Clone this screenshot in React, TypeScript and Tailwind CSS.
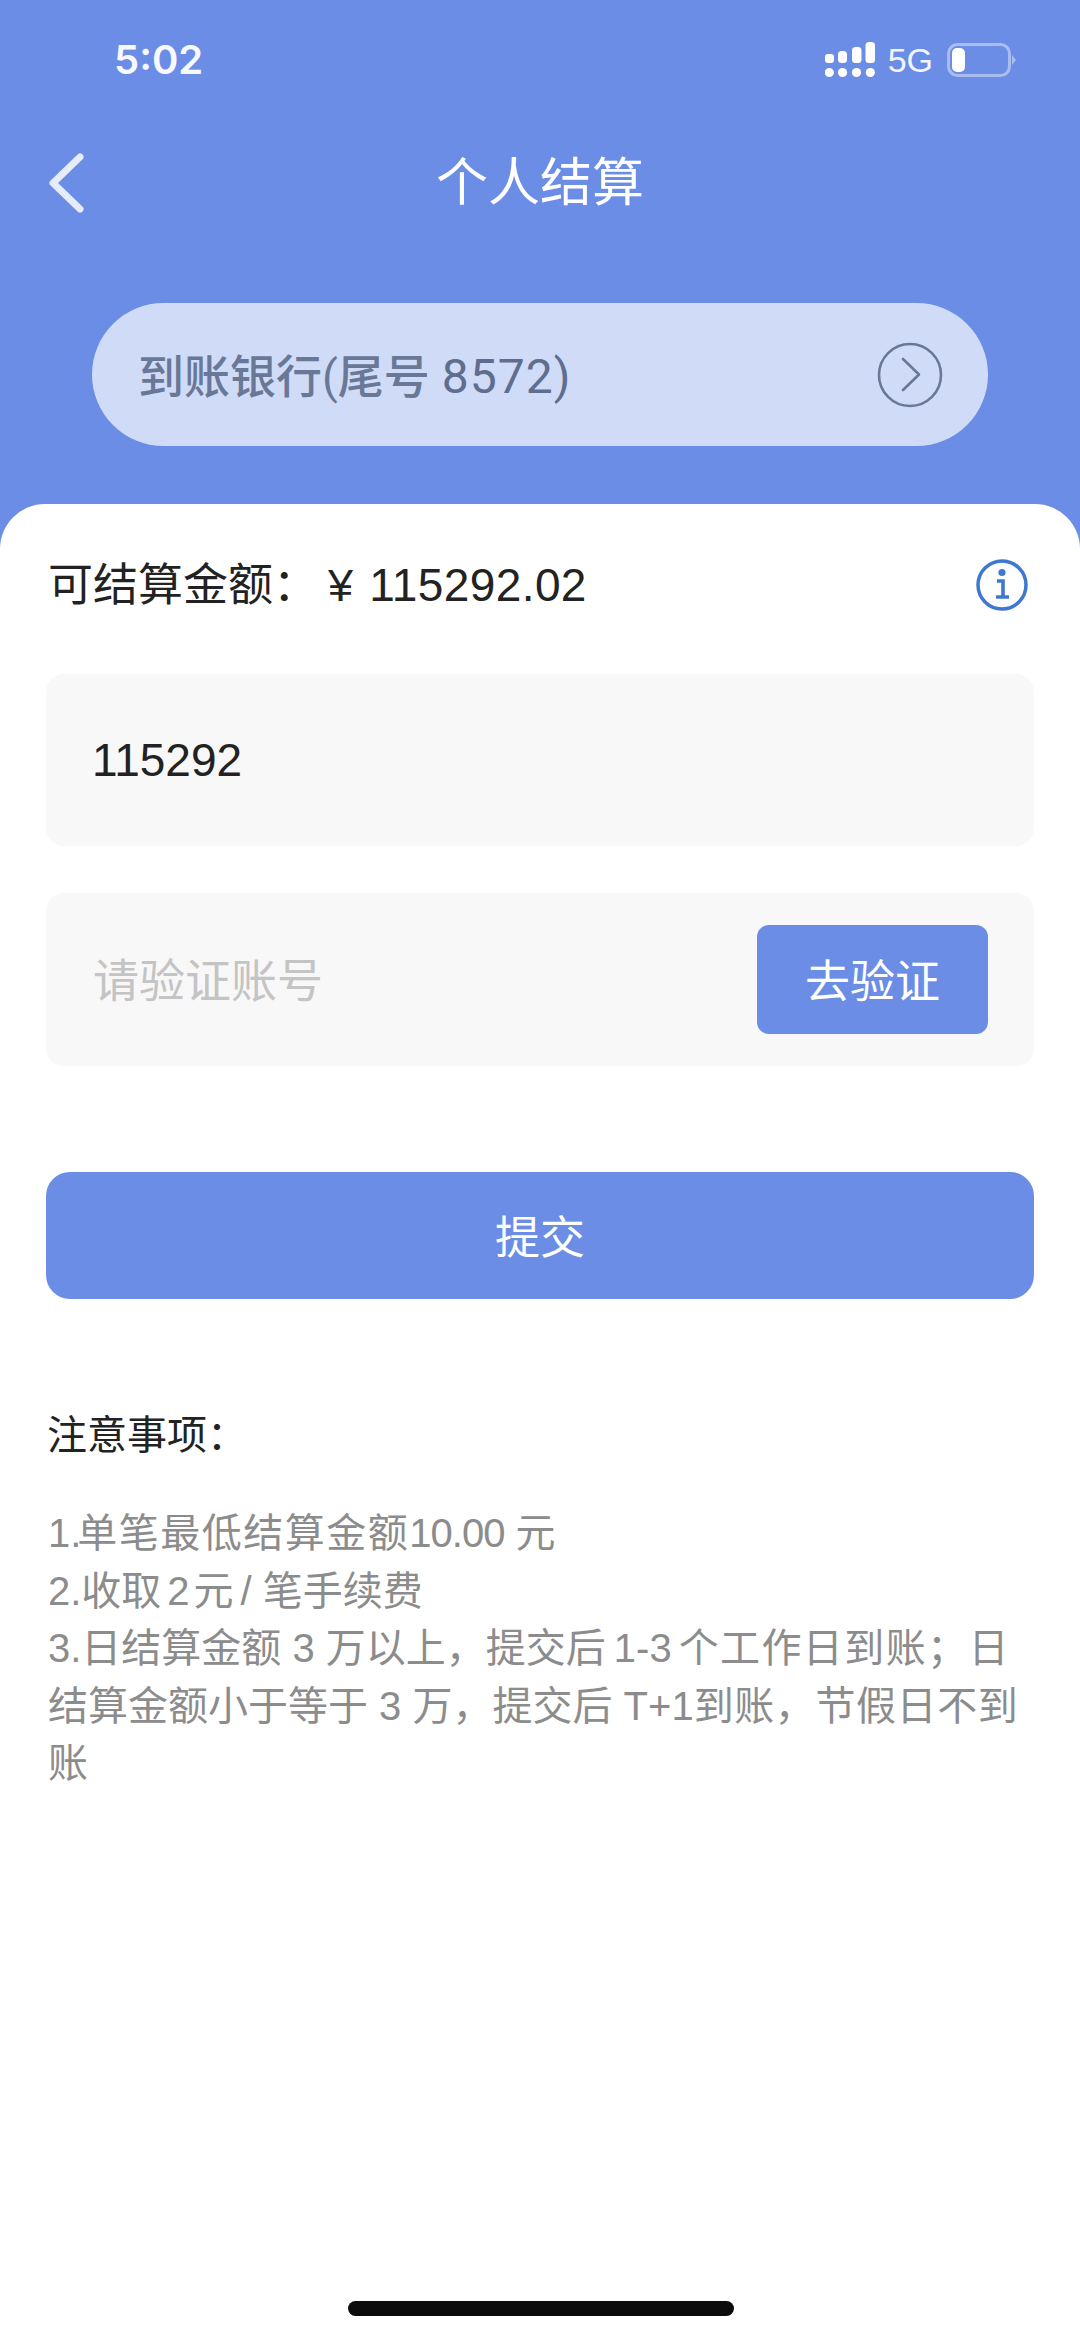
export default function App() {
  const font = { fontFamily: '"Liberation Sans","Noto Sans CJK SC",sans-serif' };
  return (
    <div style={font} className="relative flex h-[2339px] w-[1080px] flex-col overflow-hidden bg-[#6b8de6]">
      <div className="flex h-[120px] shrink-0 items-center justify-between pl-[114px] pr-[63px]">
        <span className="font-['Inter'] text-[40px] font-semibold leading-none text-[#f7f9fe]">5:02</span>
        <div className="flex items-center">
          <svg width="50" height="36" viewBox="0 0 50 36" fill="#fff">
            <rect x="0" y="12" width="9" height="9" rx="3" />
            <rect x="13" y="9" width="9" height="12" rx="3.5" />
            <rect x="27" y="5" width="9.5" height="16" rx="3.5" />
            <rect x="40.5" y="0" width="9.5" height="21" rx="3.5" />
            <circle cx="4.3" cy="30.5" r="4.6" />
            <circle cx="17.5" cy="30.5" r="4.6" />
            <circle cx="31.5" cy="30.5" r="4.6" />
            <circle cx="45.3" cy="30.5" r="4.6" />
          </svg>
          <span className="ml-[13px] text-[34px] leading-none text-[#f2f5fd]">5G</span>
          <svg className="ml-[14px]" width="70" height="34" viewBox="0 0 70 34">
            <rect x="1.5" y="1.5" width="61" height="31" rx="9" fill="none" stroke="#a9bdf0" strokeWidth="3" />
            <rect x="5" y="5" width="13" height="24" rx="5" fill="#fff" />
            <path d="M65 12 L69 17 L65 22 Z" fill="#a9bdf0" />
          </svg>
        </div>
      </div>

      <div className="relative flex h-[120px] shrink-0 items-center justify-center">
        <svg className="absolute left-[45px] top-[32px]" width="42" height="62" viewBox="0 0 42 62" fill="none">
          <path d="M35 5 L8 31 L35 57" stroke="#e6ecfb" strokeWidth="7" strokeLinecap="round" strokeLinejoin="round" />
        </svg>
        <span className="pt-[5px] text-[52px] leading-none text-white">个人结算</span>
      </div>

      <div className="mx-[92px] mb-[58px] mt-[63px] flex h-[143px] shrink-0 items-center justify-between rounded-full bg-[#d0dcf7] pl-[46px] pr-[45px]">
        <span className="pt-[5px] text-[46px] font-medium leading-none text-[#6a7897]">
          到账银行
          <span className="font-['Roboto'] font-normal">(</span>
          尾号
          <span className="ml-[12px] font-['Roboto'] text-[48px] font-normal tracking-[1px] text-[#5f6e8f]">8572)</span>
        </span>
        <svg width="66" height="66" viewBox="0 0 66 66" fill="none" stroke="#6a7897" strokeWidth="2.6" strokeLinecap="round" strokeLinejoin="round">
          <circle cx="33" cy="33" r="31" />
          <path d="M26 17 L42 32.5 L26 48" />
        </svg>
      </div>

      <div className="flex flex-1 flex-col rounded-t-[45px] bg-white px-[46px] pt-[51px]">
        <div className="flex h-[60px] items-center justify-between">
          <span className="pl-[2px] text-[45px] leading-none text-[#222222]">
            可结算金额：<span className="ml-[10px]">¥</span>
            <span className="ml-[3px] text-[46px] tracking-[0.4px]"> 115292.02</span>
          </span>
          <svg className="mr-[6px]" width="52" height="52" viewBox="0 0 52 52" fill="none">
            <circle cx="26" cy="26" r="24" stroke="#3f78d0" strokeWidth="3.5" />
            <circle cx="26" cy="13.5" r="3.6" fill="#3f78d0" />
            <path d="M21 22 H27 V37 M20 38 H33" stroke="#3f78d0" strokeWidth="3.6" />
          </svg>
        </div>

        <div className="mt-[59px] flex h-[172px] items-center rounded-[18px] bg-[#f8f8f8] pl-[46px] text-[46px] leading-none text-[#222222]">
          115292
        </div>

        <div className="mt-[47px] flex h-[173px] items-center justify-between rounded-[18px] bg-[#f8f8f8] pl-[47px] pr-[46px]">
          <span className="pt-[2px] text-[46px] leading-none text-[#c4c4c4]">请验证账号</span>
          <div className="flex h-[109px] w-[231px] items-center justify-center rounded-[12px] bg-[#6b8de6] pt-[5px] text-[45px] leading-none text-white">
            去验证
          </div>
        </div>

        <div className="mt-[106px] flex h-[127px] items-center justify-center rounded-[24px] bg-[#6b8de6] pt-[5px] text-[45px] leading-none text-white">
          提交
        </div>

        <div className="mt-[107px] h-[58px] pl-[1px] text-[40px] leading-[58px] text-[#222222]">注意事项：</div>

        <div className="mt-[41px] pl-[2px] text-[40px] leading-[57.5px] text-[#8c8c8c]">
          <div>
            <span className="mr-[-4px]">1.</span>
            <span className="tracking-[1.5px]">单笔最低结算金额</span>
            <span className="tracking-[-1px]">10.00</span> 元
          </div>
          <div>
            2.收取<span className="ml-[6px]">2</span>
            <span className="ml-[4px]">元</span>
            <span className="ml-[7px]">/</span>
            <span className="ml-[11px]">笔手续费</span>
          </div>
          <div className="whitespace-nowrap">
            3.日结算金额 3 万以上，提交后<span className="ml-[8px]">1-3</span>
            <span className="ml-[7px] tracking-[1.4px]">个工作日到账；日</span>
          </div>
          <div className="whitespace-nowrap">
            结算金额小于等于 3 万，提交后 T+1<span className="tracking-[0.6px]">到账，节假日不到</span>
          </div>
          <div>账</div>
        </div>
      </div>

      <div className="absolute bottom-[23px] left-[348px] h-[15px] w-[386px] rounded-full bg-[#0c0c0c]" />
    </div>
  );
}
